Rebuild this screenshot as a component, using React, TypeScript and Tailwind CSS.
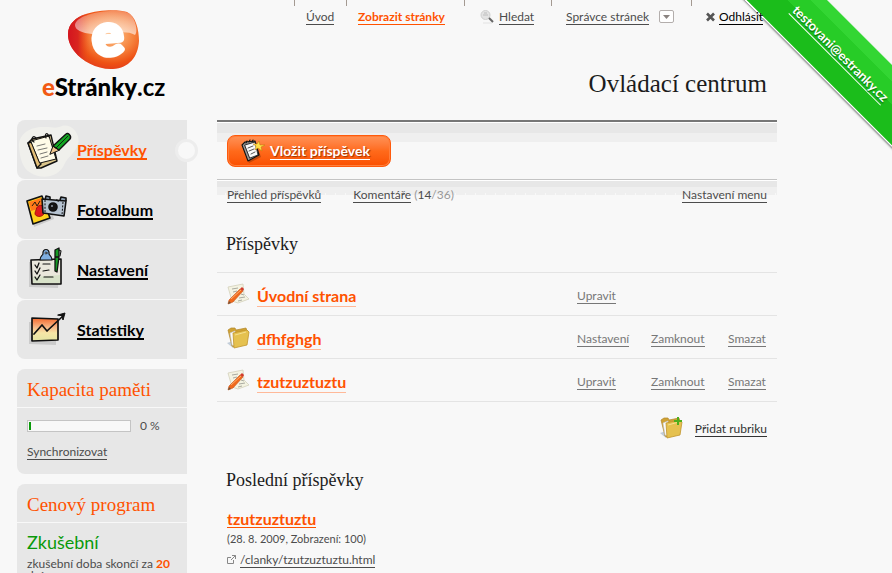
import type { ReactNode } from "react";

const sans = "font-[Lato,'Liberation_Sans',sans-serif]";
const serif = "font-['Liberation_Serif',serif]";

function TextLink({ children, className = "" }: { children: ReactNode; className?: string }) {
  return (
    <a href="#" className={`inline-block border-b border-current whitespace-nowrap leading-[14px] ${className}`}>
      {children}
    </a>
  );
}

function Logo() {
  return (
    <a href="#" aria-label="eStránky.cz" className="ml-[25px] block w-[126px] pt-[9px]">
      <svg width="126" height="62" viewBox="42 9 126 62" className="overflow-visible" aria-hidden="true">
        <defs>
          <radialGradient id="drop" cx="0.62" cy="0.42" r="0.62">
            <stop offset="0" stopColor="#ffc48a" />
            <stop offset="0.5" stopColor="#f5813c" />
            <stop offset="0.78" stopColor="#ee5215" />
            <stop offset="1" stopColor="#e23a1c" />
          </radialGradient>
          <linearGradient id="dropEdge" x1="0" x2="1">
            <stop offset="0" stopColor="#d3141f" />
            <stop offset="0.14" stopColor="#d9251f" />
            <stop offset="0.3" stopColor="#e9501a" stopOpacity="0" />
          </linearGradient>
          <linearGradient id="gloss" x1="0" x2="0" y1="0" y2="1">
            <stop offset="0" stopColor="#fff" stopOpacity="0.25" />
            <stop offset="1" stopColor="#fff" stopOpacity="0.6" />
          </linearGradient>
        </defs>
        <path d="M68 34C68 24 76 17 86 14C97 10 118 9 127 12C136 16 139 30 139 41C138 57 129 68 113 69C98 70 82 61 75 52C70 46 68 40 68 34Z" fill="url(#drop)" />
        <path d="M68 34C68 24 76 17 86 14C97 10 118 9 127 12C136 16 139 30 139 41C138 57 129 68 113 69C98 70 82 61 75 52C70 46 68 40 68 34Z" fill="url(#dropEdge)" />
        <path d="M75 25C76 17 93 12 110 11C126 10 131 13 134 20C137 27 137 33 135 35C125 29 110 35 92 34C82 33 75 30 75 25Z" fill="url(#gloss)" />
        <text x="108" y="55" textAnchor="middle" fontSize="58" fontWeight="900" fill="#fff" stroke="#fff" strokeWidth="5" strokeLinejoin="round" fontFamily="Lato" transform="rotate(-5 108 40)">e</text>
      </svg>
      <span className="mt-[2px] block whitespace-nowrap text-[24px] leading-[28px] font-black text-black">
        <span className="text-[#f25a14]">e</span>Stránky<span className="font-bold">.cz</span>
      </span>
    </a>
  );
}

function NotepadIcon() {
  return (
    <svg width="62" height="59" viewBox="0 0 62 59" aria-hidden="true">
      <path d="M2 27C1 13 15 6 28 7C36 7 38 9 45 6C55 3 64 15 61 24C58 34 51 36 47 45C42 57 25 60 14 53C5 48 3 38 2 27Z" fill="#f0f0ec" />
      <g stroke="#111" strokeWidth="1.4" strokeLinejoin="round" strokeLinecap="round">
        <path d="M11 23L15 19L34 15L40 41L24 48L20 48Z" fill="#d9c48a" />
        <path d="M11 23L15 22L24 44L20 48Z" fill="#e2bd76" />
        <path d="M14 21L32 16L39 39L23 43Z" fill="#fffbe8" strokeWidth="1" />
        <path d="M17 22C13 20 16 14 19 18M29 18C27 13 31 12 32 17" fill="none" strokeWidth="1.2" />
        <path d="M20 26L28 24M21 30L30 28M23 34L30 32M24 38L31 36" strokeWidth="0.8" stroke="#555" fill="none" />
        <path d="M33 34L36 26L42 30Z" fill="#f0c58c" strokeWidth="1" />
        <path d="M36 26L49 14C51 12 55 16 53 19L42 30Z" fill="#12a822" />
        <path d="M39 28L51 16" strokeWidth="0.9" />
      </g>
    </svg>
  );
}

function AlbumIcon() {
  return (
    <svg width="62" height="59" viewBox="0 0 62 59" aria-hidden="true">
      <path d="M13 25L31 20L37 39L17 47Z" fill="#000" opacity="0.12" />
      <g stroke="#111" strokeWidth="1.6" strokeLinejoin="round">
        <path d="M10 21L25 16L33 38L16 44Z" fill="#ffd21c" />
        <path d="M12 22L24 18L27 27L14 31Z" fill="#ff7a1a" stroke="none" />
        <path d="M19 30C20 24 27 24 28 29C29 34 24 38 20 36C17 35 18 32 19 30Z" fill="#e01b1b" stroke="#8e0d0d" strokeWidth="0.8" />
        <path d="M15 26L18 22L20 26L23 21" fill="none" strokeWidth="0.9" />
        <path d="M28 20L29 16L33 17L33 20M43 20L44 17L49 18L49 21" fill="#8fa2b5" />
        <path d="M25 19L49 21L47 36L26 33Z" fill="#b6c3d1" />
        <path d="M28 20L28 33M46 22L45 35" strokeWidth="1" strokeDasharray="2 1.4" />
        <circle cx="36" cy="27" r="4" fill="#151515" />
        <path d="M39 20L42 21" />
        <circle cx="35" cy="26" r="1" fill="#8d99a6" stroke="none" />
      </g>
    </svg>
  );
}

function ChecklistIcon() {
  return (
    <svg width="62" height="59" viewBox="0 0 62 59" aria-hidden="true">
      <path d="M12 22L43 22L41 48L12 47Z" fill="#000" opacity="0.12" />
      <g stroke="#111" strokeWidth="1.6" strokeLinejoin="round" strokeLinecap="round" fill="none">
        <path d="M14 20L44 19L44 44L15 44Z" fill="#eae7dc" />
        <path d="M16 37L43 35L43 43L16 43Z" fill="#d8e2c9" stroke="none" />
        <path d="M23 20C23 16 25 16 26 14C25 8 33 8 32 14C33 16 35 16 35 20Z" fill="#7faee0" strokeWidth="1.2" />
        <circle cx="29" cy="13" r="1" fill="#fff" strokeWidth="0.8" />
        <path d="M18 25L20 28L22 23M18 31L20 34L23 28M18 37L20 40L23 35" strokeWidth="1.3" />
        <path d="M26 24L33 24M26 31L32 30M27 37L36 37" strokeWidth="1.2" />
        <path d="M38 10L42 8L42 17L38 17ZM38 17L42 17L40 32L38 31Z" fill="#149a22" strokeWidth="1.3" />
        <path d="M42 10L44 11L43 16" strokeWidth="1.1" />
      </g>
    </svg>
  );
}

function ChartIcon() {
  return (
    <svg width="62" height="59" viewBox="0 0 62 59" aria-hidden="true">
      <defs>
        <linearGradient id="chart" x1="0" x2="0" y1="0" y2="1">
          <stop offset="0" stopColor="#f4692e" />
          <stop offset="0.4" stopColor="#f7b787" />
          <stop offset="0.65" stopColor="#f6e6a6" />
          <stop offset="1" stopColor="#e4e5a2" />
        </linearGradient>
      </defs>
      <path d="M12 22L39 22L39 45L12 44Z" fill="#000" opacity="0.12" />
      <g stroke="#111" strokeWidth="1.7" strokeLinejoin="round" strokeLinecap="round" fill="none">
        <path d="M15 18L41 19L41 40L15 41Z" fill="url(#chart)" />
        <path d="M17 34L25 25L30 31L46 16" />
        <path d="M41 15L48 13L46 20L45 16Z" fill="#111" strokeWidth="1" />
      </g>
    </svg>
  );
}

function EditIcon() {
  return (
    <svg width="24" height="24" viewBox="0 0 24 24" aria-hidden="true">
      <path d="M2 4L17 1L18 11L23 16L12 20L6 18Z" fill="#f4f3e2" stroke="#d3d1bb" strokeWidth="0.8" />
      <path d="M6 6L12 5M7 9L11 8M13 15L19 14M12 18L16 17M15 11L18 12" stroke="#a9aaa0" fill="none" />
      <path d="M3 17L14 6L17 8L7 19L2 21Z" fill="#f0691c" stroke="#c9581c" strokeWidth="0.6" />
      <path d="M5 16L15 7" stroke="#ffae68" />
      <path d="M14 6L16 4L18 6L17 8Z" fill="#d23a2a" />
      <path d="M3 18L5 20L2 21Z" fill="#6d5640" />
    </svg>
  );
}

function FolderIcon({ plus = false }: { plus?: boolean }) {
  return (
    <svg width="24" height="24" viewBox="0 0 24 24" aria-hidden="true">
      <path d="M1 17L7 15L7 22Z" fill="#9fb0c4" opacity="0.6" />
      <path d="M2 4L5 2L9 2L10 4L20 2L21 5L8 21L6 20Z" fill="#cfa234" stroke="#b3872a" strokeWidth="0.7" />
      <path d="M4 7L9 5L9 20L6 19Z" fill="#fbfbfb" stroke="#c3c8cf" strokeWidth="0.6" />
      <path d="M7 7L21 4L23 6L21 19L8 22Z" fill="#e5c14f" stroke="#c0942c" strokeWidth="0.8" />
      <path d="M9 9L20 6" stroke="#f5df91" />
      {plus && <path d="M19 1V9M15 5H23" stroke="#4fae1c" strokeWidth="2" />}
    </svg>
  );
}

function PostIcon() {
  return (
    <svg width="26" height="26" viewBox="0 0 26 26" aria-hidden="true">
      <path d="M5 8L16 5L21 19L9 25Z" fill="#6e2b08" opacity="0.4" />
      <g stroke="#111" strokeWidth="1.1" strokeLinejoin="round" strokeLinecap="round">
        <path d="M2 7L5 4L15 3L19 17L8 23Z" fill="#999" />
        <path d="M5 7L15 4L18 17L10 20Z" fill="#fafafa" strokeWidth="0.8" />
        <path d="M6 5L7 3M9 4L10 2M12 4L13 2" fill="none" />
        <path d="M8 10L13 8M9 13L14 11M11 16L15 14" strokeWidth="0.9" stroke="#444" fill="none" />
      </g>
      <path d="M19 3L20 7L25 7L21 9L22 13L18 10L15 12L16 8L13 6L17 6Z" fill="#ffe14a" stroke="#b97a08" strokeWidth="0.5" />
    </svg>
  );
}

function NavCell({ children, className }: { children?: ReactNode; className: string }) {
  return (
    <li className={`bg-[linear-gradient(#a49a92,#a49a92)] bg-[length:1px_6px] bg-no-repeat pt-[10px] ${className}`}>
      <div className="flex items-start">{children}</div>
    </li>
  );
}

const menu = [
  { label: "Příspěvky", icon: <NotepadIcon />, active: true },
  { label: "Fotoalbum", icon: <AlbumIcon />, active: false },
  { label: "Nastavení", icon: <ChecklistIcon />, active: false },
  { label: "Statistiky", icon: <ChartIcon />, active: false },
];

const sections = [
  { title: "Úvodní strana", icon: <EditIcon />, actions: ["Upravit", "", ""] },
  { title: "dfhfghgh", icon: <FolderIcon />, actions: ["Nastavení", "Zamknout", "Smazat"] },
  { title: "tzutzuztuztu", icon: <EditIcon />, actions: ["Upravit", "Zamknout", "Smazat"] },
];

function SidePanel({ title, children }: { title: string; children: ReactNode }) {
  return (
    <section className="mt-[10px] rounded-l-lg bg-[#e7e7e7]">
      <h2 className={`${serif} border-b border-[#f8f8f8] px-[10px] pt-[9px] pb-[5px] text-[19px] leading-6 text-[#ff5200]`}>
        {title}
      </h2>
      {children}
    </section>
  );
}

export default function App() {
  return (
    <div className={`${sans} relative h-screen overflow-hidden bg-[#f8f8f8] text-[12px] text-[#4c4c4c]`}>
      <div className="ml-[17px] max-w-[760px]">
        <header className="flex h-[120px] items-start justify-between">
          <Logo />
          <div>
            <nav aria-label="Uživatel" className="relative z-10">
              <ul className="flex">
                <NavCell className="w-[52px] pl-3"><TextLink>Úvod</TextLink></NavCell>
                <NavCell className="w-[118px] pl-3"><TextLink className="font-bold text-[#ff5200]">Zobrazit stránky</TextLink></NavCell>
                <NavCell className="w-[87px] pl-4">
                  <svg width="15" height="15" viewBox="0 0 15 15" className="mr-1" aria-hidden="true">
                    <path d="M3 13H12" stroke="#e2e2e2" />
                    <circle cx="5.5" cy="5" r="4.5" fill="#e3e3e3" stroke="#cfcfcf" />
                    <path d="M3 5H8M4 3H7" stroke="#bdbdbd" />
                    <path d="M9 8L13 12" stroke="#666" strokeWidth="2" />
                  </svg>
                  <TextLink>Hledat</TextLink>
                </NavCell>
                <NavCell className="w-[140px] pl-[15px]">
                  <TextLink>Správce stránek</TextLink>
                  <button type="button" aria-label="Rozbalit nabídku" className="ml-[10px] flex h-[13px] w-[15px] items-center justify-center rounded-xs border border-[#b3aeac] bg-white">
                    <svg width="7" height="4" viewBox="0 0 7 4" aria-hidden="true"><path d="M0 0H7L3.500 4Z" fill="#8a8380" /></svg>
                  </button>
                </NavCell>
                <NavCell className="w-[86px] pl-[15px]">
                  <svg width="9" height="14" viewBox="0 0 9 14" className="mr-1" aria-hidden="true">
                    <path d="M1 3.500L8 10.500M8 3.500L1 10.500" stroke="#555" strokeWidth="2.600" />
                  </svg>
                  <TextLink className="text-black">Odhlásit</TextLink>
                </NavCell>
              </ul>
            </nav>
            <h1 className={`${serif} mt-[43px] pr-[10px] text-right text-[25px] leading-8 text-[#1c1c1c]`}>Ovládací centrum</h1>
          </div>
        </header>

        <div className="flex items-start gap-[30px]">
          <aside className="w-[170px] shrink-0">
            <nav aria-label="Hlavní menu">
              <ul className="flex flex-col gap-px">
                {menu.map((item) => (
                  <li key={item.label} className="relative flex h-[59px] items-start rounded-l-lg bg-[#e7e7e7]">
                    <span className="-mr-[2px] shrink-0">{item.icon}</span>
                    <a
                      href="#"
                      className={
                        item.active
                          ? "mt-[21px] border-b-2 border-current text-[16px] font-bold leading-[17px] text-[#ff5200]"
                          : "mt-[21px] border-b-2 border-current text-[16px] font-bold leading-[17px] text-black"
                      }
                    >
                      {item.label}
                    </a>
                    {item.active && (
                      <span className="absolute -right-[11px] top-[19px] size-[23px] rounded-full border-[3px] border-[#ededed] bg-[#f8f8f8]" />
                    )}
                  </li>
                ))}
              </ul>
            </nav>

            <SidePanel title="Kapacita paměti">
              <div className="px-[10px] pt-[11px] pb-[13px]">
                <div className="flex items-center gap-[9px] leading-[14px]">
                  <div role="progressbar" aria-label="Kapacita paměti" aria-valuenow={0} className="h-3 w-[104px] border border-[#c4c4c4] bg-[#f8f8f8] p-px">
                    <div className="h-full w-[2px] bg-[#0a9a0a]" />
                  </div>
                  <span>0 %</span>
                </div>
                <TextLink className="mt-3">Synchronizovat</TextLink>
              </div>
            </SidePanel>

            <SidePanel title="Cenový program">
              <div className="px-[10px] pt-[7px] pb-4">
                <p className="text-[18px] leading-6 text-[#0a9a0a]">Zkušební</p>
                <p className="mt-1 leading-3">
                  zkušební doba skončí za <strong className="text-[#ff5200]">20</strong> dní
                </p>
              </div>
            </SidePanel>
          </aside>

          <main className="min-w-0 flex-1">
            <div className="h-[59px] border-t-2 border-[#777] bg-[linear-gradient(#fff_0_1px,#e7e7e7_1px_11px,#efefef_11px_20px,transparent_20px)] pt-[13px] pl-[10px]">
              <button
                type="button"
                className="flex h-8 w-[164px] items-center rounded-lg border border-[#ff5a0c] bg-linear-to-b from-[#ff9255] via-[#ff6a1a] via-50% to-[#fa4f00] pl-[12px] shadow-[inset_0_0_0_1px_#ff7f3c]"
              >
                <PostIcon />
                <span className="ml-1 border-b border-white text-[14px] font-bold leading-[17px] text-white [text-shadow:1px_1px_1px_#a03400]">
                  Vložit příspěvek
                </span>
              </button>
            </div>
            <div className="flex items-start border-t border-[#c4c4c4] bg-[repeating-linear-gradient(90deg,#f8f8f8_0_1px,transparent_1px_10px),linear-gradient(#fff_0_1px,#e7e7e7_1px_7px,#efefef_7px_15px,transparent_15px)] bg-[length:100%_2px,100%_100%] bg-[position:8px_13px,0_0] bg-no-repeat px-[10px] pt-2">
              <TextLink>Přehled příspěvků</TextLink>
              <span className="ml-8 leading-[14px] text-[#999]">
                <TextLink className="text-[#4c4c4c]">Komentáře</TextLink> (<span className="text-[#4c4c4c]">14</span>/36)
              </span>
              <TextLink className="ml-auto">Nastavení menu</TextLink>
            </div>

            <h2 className={`${serif} mt-[29px] pl-[9px] text-[18px] leading-6 text-[#1c1c1c]`}>Příspěvky</h2>
            <table className="mt-4 w-full table-fixed border-collapse border-t border-[#e4e4e4]">
              <colgroup>
                <col />
                <col className="w-[74px]" />
                <col className="w-[77px]" />
                <col className="w-[49px]" />
              </colgroup>
              <tbody>
                {sections.map((row) => (
                  <tr key={row.title} className="h-[43px] border-b border-[#e4e4e4] align-top">
                    <td className="pt-[10px] pl-[9px]">
                      <div className="flex items-start gap-[7px]">
                        {row.icon}
                        <a href="#" className="mt-[3px] border-b border-[#ffb999] text-[16px] font-bold leading-[20px] text-[#ff5200]">
                          {row.title}
                        </a>
                      </div>
                    </td>
                    {row.actions.map((action, i) => (
                      <td key={i} className="pt-[14px] text-[#777]">
                        {action && <TextLink>{action}</TextLink>}
                      </td>
                    ))}
                  </tr>
                ))}
              </tbody>
            </table>
            <div className="flex items-start justify-end gap-[12px] pt-[14px] pr-[10px]">
              <FolderIcon plus />
              <TextLink className="mt-[6px] text-[#333]">Přidat rubriku</TextLink>
            </div>

            <h2 className={`${serif} mt-7 pl-[9px] text-[18px] leading-6 text-[#1c1c1c]`}>Poslední příspěvky</h2>
            <article className="mt-[18px] pl-[10px]">
              <h3 className="flex">
                <a href="#" className="border-b border-current text-[16px] font-bold leading-[17px] text-[#ff5200]">tzutzuztuztu</a>
              </h3>
              <p className="mt-[4px] text-[11px] leading-[14px]">(28. 8. 2009, Zobrazení: 100)</p>
              <p className="mt-[7px] flex items-start gap-1">
                <svg width="9" height="14" viewBox="0 0 9 14" aria-hidden="true">
                  <path d="M4 4.500H0.500V10.500H6.500V7M5 2.500H8.500V6M8.500 2.500L4 7" fill="none" stroke="#888" />
                </svg>
                <TextLink>/clanky/tzutzuztuztu.html</TextLink>
              </p>
            </article>
          </main>
        </div>
      </div>

      <div className="absolute right-0 top-0 h-[154px] w-[152px] overflow-hidden">
        <div className="absolute -left-[50px] top-[25px] flex h-[58px] w-[300px] rotate-45 items-center justify-center border-b border-white bg-[linear-gradient(#33d633_0_12px,#27cc27_12px_28px,#1bbd1b_28px)] shadow-[0_1px_2px_#777]">
          <a href="#" className="border-b border-white text-[13px] font-bold leading-[15px] text-white [text-shadow:1px_1px_1px_#0c7a0c]">
            testovani@estranky.cz
          </a>
        </div>
      </div>
    </div>
  );
}
